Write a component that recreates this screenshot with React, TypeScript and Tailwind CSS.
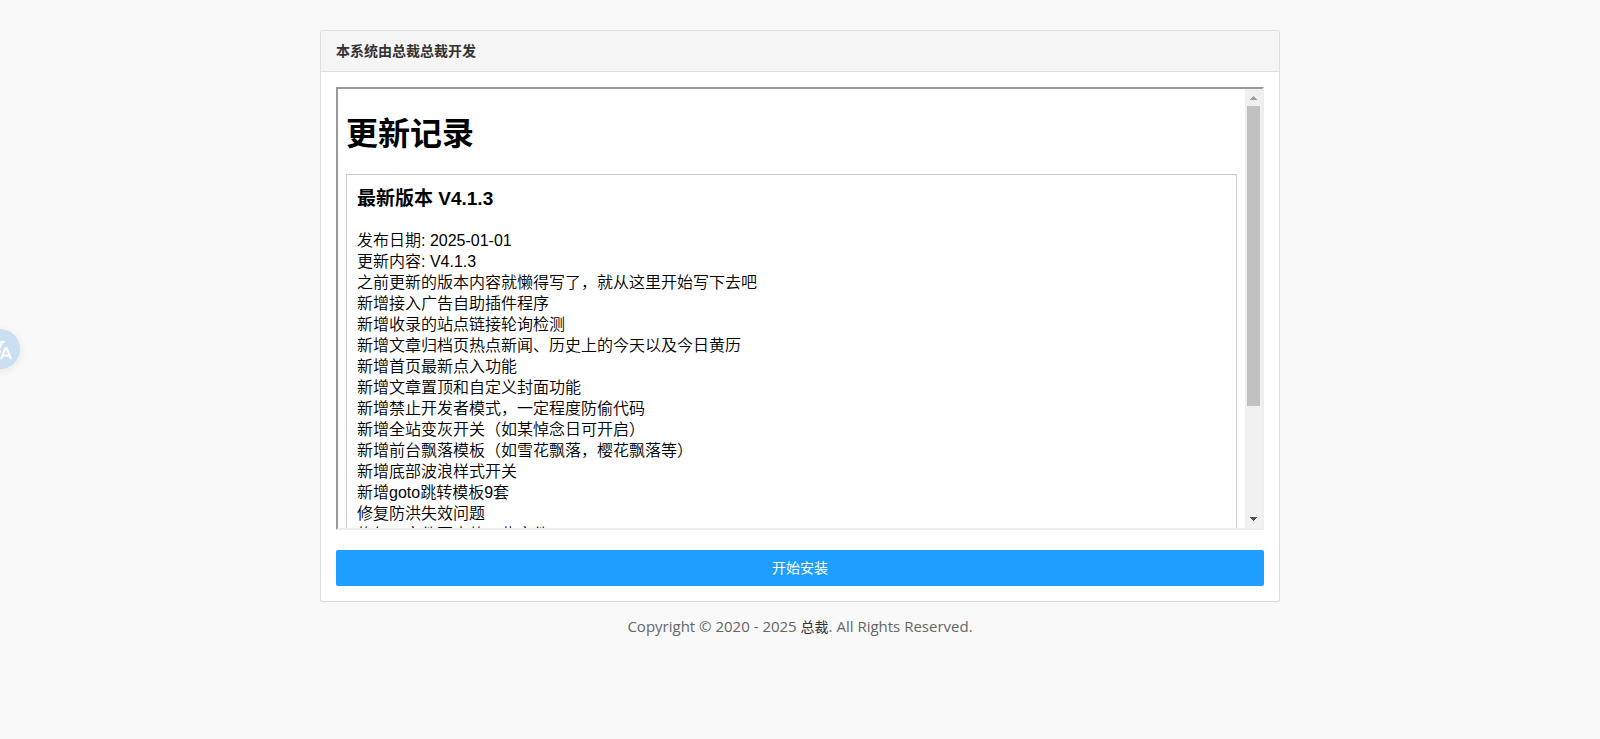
const changes = [
  '发布日期: 2025-01-01',
  '更新内容: V4.1.3',
  '之前更新的版本内容就懒得写了，就从这里开始写下去吧',
  '新增接入广告自助插件程序',
  '新增收录的站点链接轮询检测',
  '新增文章归档页热点新闻、历史上的今天以及今日黄历',
  '新增首页最新点入功能',
  '新增文章置顶和自定义封面功能',
  '新增禁止开发者模式，一定程度防偷代码',
  '新增全站变灰开关（如某悼念日可开启）',
  '新增前台飘落模板（如雪花飘落，樱花飘落等）',
  '新增底部波浪样式开关',
  '新增goto跳转模板9套',
  '修复防洪失效问题',
  '修复了文件页中的一些文件',
]

function Scrollbar() {
  return (
    <div className="flex w-[17px] shrink-0 flex-col items-center bg-[#f0f0f0]" aria-hidden="true">
      <svg className="h-[17px] w-[17px] shrink-0" viewBox="0 0 17 17" shapeRendering="crispEdges">
        <path d="M8 7h1v1h1v1h1v1h1v1H5v-1h1V9h1V8h1z" fill="#a0a0a0" />
      </svg>
      <div className="h-[300px] w-[13px] bg-[#c1c1c1]" />
      <svg className="mt-auto h-[17px] w-[17px] shrink-0" viewBox="0 0 17 17" shapeRendering="crispEdges">
        <path d="M5 6h7v1h-1v1h-1v1H9v1H8V9H7V8H6V7H5z" fill="#505050" />
      </svg>
    </div>
  )
}

function Changelog() {
  return (
    <div className="flex h-[443px] border-2 border-t-[#9a9a9a] border-r-[#eee] border-b-[#eee] border-l-[#9a9a9a] bg-white font-['Liberation_Sans','Noto_Sans_CJK_SC',sans-serif] text-black">
      <div className="min-w-0 flex-1 overflow-hidden px-2">
        <h1 className="mt-6 mb-[18px] text-[32px] leading-[43px] font-bold">更新记录</h1>
        <div className="border border-[#ccc] p-[10px]">
          <h3 className="mb-[17px] text-[19px] leading-7 font-bold">最新版本 V4.1.3</h3>
          {changes.map((line) => (
            <p key={line} className="text-base leading-[21px] font-[350]">
              {line}
            </p>
          ))}
        </div>
      </div>
      <Scrollbar />
    </div>
  )
}

function TranslateButton() {
  return (
    <button
      type="button"
      aria-label="翻译"
      className="fixed top-[329px] -left-5 h-10 w-10 rounded-full bg-[#cbdff4] shadow-[0_2px_8px_rgba(0,0,0,0.08)]"
    >
      <svg className="h-10 w-10" viewBox="0 0 40 40" fill="none" stroke="#fff" strokeWidth="2">
        <path d="M11 13h14M18 10v3M22 13c-1 5-5 9-9 11M15 16c1 3 3 5 6 7" />
        <path d="M21 30l4.500-11h1l4.500 11M22.500 26.500h7" />
      </svg>
    </button>
  )
}

export default function App() {
  return (
    <div className="min-h-screen bg-[#f9f9f9] px-4 pt-[30px] pb-8 font-['Noto_Sans','Noto_Sans_CJK_SC',sans-serif] text-sm text-[#333]">
      <main className="mx-auto max-w-[960px] rounded-xs border border-[#ddd] bg-white">
        <header className="border-b border-[#ddd] bg-[#f5f5f5] px-[15px] text-sm leading-10 font-bold">
          本系统由总裁总裁开发
        </header>
        <div className="p-[15px]">
          <Changelog />
          <button type="button" className="mt-5 block h-9 w-full rounded-xs bg-[#1e9fff] text-sm text-white">
            开始安装
          </button>
        </div>
      </main>
      <footer className="pt-[14px] text-center font-['Open_Sans','Noto_Sans_CJK_SC',sans-serif] text-[15px] leading-5 text-[#666]">
        Copyright © 2020 - 2025{' '}
        <a href="#" className="text-sm leading-5 text-[#333]">
          总裁
        </a>
        . All Rights Reserved.
      </footer>
      <TranslateButton />
    </div>
  )
}
